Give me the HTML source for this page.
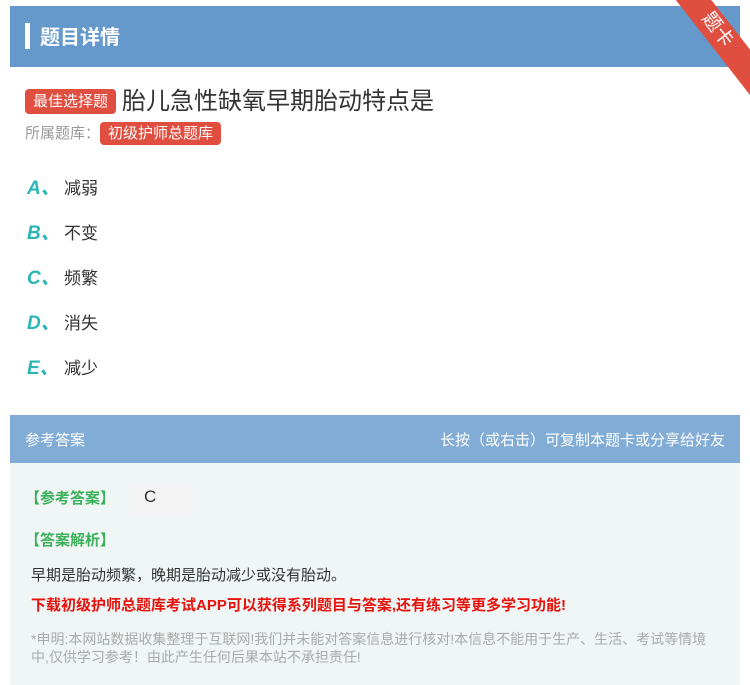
<!DOCTYPE html><html><head><meta charset="utf-8"><style>
body{margin:0;width:750px;height:685px;background:#fff;font-family:"Liberation Sans","Noto Sans CJK SC",sans-serif;position:relative;overflow:hidden}
.hd{position:absolute;left:10px;top:6px;width:730px;height:61px;background:#6599cb}
.hd .bar{position:absolute;left:15px;top:17px;width:5px;height:26px;background:#fff}
.hd span{position:absolute;left:30px;top:15px;color:#fff;font-size:20px;font-weight:bold}
.rib{position:absolute;right:-42px;top:16px;width:150px;height:28px;background:#e04e40;transform:rotate(52deg);color:#fff;font-size:19px;text-align:center;line-height:28px}
.tag{display:inline-block;background:#e04e40;color:#fff;border-radius:4px;padding:0 8px;font-size:15px}
.q{position:absolute;left:25px;top:81px;font-size:24px;color:#333}
.q .tag{height:25px;line-height:25px;vertical-align:3px;margin-right:6px}
.lib{position:absolute;left:25px;top:122px;font-size:15px;color:#999}
.lib .tag{height:23px;line-height:23px}
.opt{position:absolute;left:27px;font-size:17px;color:#333}
.opt b{display:inline-block;width:37px;color:#2cb5b5;font-style:italic;font-size:19px}
.ah{position:absolute;left:10px;top:415px;width:730px;height:48px;background:#80acd6;color:#fff;font-size:15px}
.ab{position:absolute;left:10px;top:463px;width:730px;height:222px;background:#eff6f5}
.g{color:#3bb05a;font-size:15px;font-weight:bold;position:absolute}
</style></head><body>
<div class="hd"><div class="bar"></div><span>题目详情</span></div>
<div class="rib">题卡</div>
<div class="q"><span class="tag">最佳选择题</span>胎儿急性缺氧早期胎动特点是</div>
<div class="lib">所属题库：<span class="tag">初级护师总题库</span></div>
<div class="opt" style="top:173px"><b>A、</b>减弱</div>
<div class="opt" style="top:218px"><b>B、</b>不变</div>
<div class="opt" style="top:263px"><b>C、</b>频繁</div>
<div class="opt" style="top:308px"><b>D、</b>消失</div>
<div class="opt" style="top:353px"><b>E、</b>减少</div>
<div class="ah"><span style="position:absolute;left:15px;top:14px">参考答案</span><span style="position:absolute;right:15px;top:14px">长按（或右击）可复制本题卡或分享给好友</span></div>
<div class="ab">
<div class="g" style="left:15px;top:24px">【参考答案】</div>
<div style="position:absolute;left:122px;top:21px;width:63px;height:32px;background:#f4f4f4;font-size:17px;color:#333;padding-left:12px;box-sizing:border-box;line-height:26px">C</div>
<div class="g" style="left:15px;top:66px">【答案解析】</div>
<div style="position:absolute;left:21px;top:101px;font-size:15px;color:#333">早期是胎动频繁，晚期是胎动减少或没有胎动。</div>
<div style="position:absolute;left:21px;top:131px;font-size:15px;color:#e8120c;font-weight:bold">下载初级护师总题库考试APP可以获得系列题目与答案,还有练习等更多学习功能!</div>
<div style="position:absolute;left:21px;top:167px;width:690px;font-size:14px;color:#aaa;line-height:18px">*申明:本网站数据收集整理于互联网!我们并未能对答案信息进行核对!本信息不能用于生产、生活、考试等情境中,仅供学习参考！由此产生任何后果本站不承担责任!</div>
</div>
</body></html>
